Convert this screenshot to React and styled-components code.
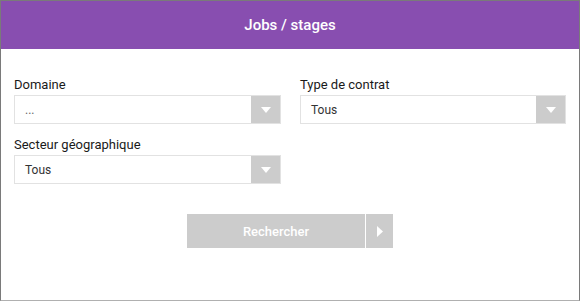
import React from 'react';
import styled, { createGlobalStyle } from 'styled-components';

const Global = createGlobalStyle`
  html, body { margin: 0; padding: 0; background: #fff; }
  body { font-family: Roboto, "Liberation Sans", sans-serif; }
`;

const Frame = styled.div`
  box-sizing: border-box;
  width: 580px;
  height: 301px;
  border: 1px solid #7a7a7a;
  border-bottom-color: #b0b0b0;
  background: #fff;
  display: flex;
  flex-direction: column;
`;

const Header = styled.div`
  height: 48px;
  background: #884eb0;
  color: #fff;
  display: flex;
  align-items: center;
  justify-content: center;
  font-size: 15px;
  font-weight: 500;
`;

const Body = styled.div`
  padding: 28px 13px 0 13px;
  display: grid;
  grid-template-columns: 267px 266px;
  column-gap: 19px;
  row-gap: 13px;
`;

const Field = styled.div`
  display: flex;
  flex-direction: column;
`;

const Label = styled.label`
  font-size: 13px;
  color: #1a1a1a;
  line-height: 15px;
  margin-bottom: 3px;
`;

const Select = styled.div`
  box-sizing: border-box;
  height: 29px;
  border: 1px solid #e2e2e2;
  display: flex;
  align-items: stretch;
`;

const Value = styled.span`
  flex: 1;
  display: flex;
  align-items: center;
  padding-left: 10px;
  font-size: 12px;
  color: ${p => (p.muted ? '#666' : '#333')};
`;

const ArrowBox = styled.span`
  width: 29px;
  background: #cccccc;
  display: flex;
  align-items: center;
  justify-content: center;
`;

const Actions = styled.div`
  display: flex;
  justify-content: center;
  padding-top: 30px;
`;

const Main = styled.button`
  width: 178px;
  height: 34px;
  border: none;
  background: #cccccc;
  color: #fff;
  font-family: inherit;
  font-size: 13px;
  font-weight: 500;
`;

const Go = styled.button`
  width: 28px;
  height: 34px;
  border: none;
  border-left: 1px solid #fff;
  background: #cccccc;
  display: flex;
  align-items: center;
  justify-content: center;
  padding: 0;
`;

const Down = () => (
  <svg width="10" height="6" viewBox="0 0 10 6"><path d="M0 0h10L5 6z" fill="#fff" /></svg>
);

const Right = () => (
  <svg width="6" height="11" viewBox="0 0 6 11"><path d="M0 0v11l6-5.5z" fill="#fff" /></svg>
);

const Dropdown = ({ label, value, muted }) => (
  <Field>
    <Label>{label}</Label>
    <Select>
      <Value muted={muted}>{value}</Value>
      <ArrowBox><Down /></ArrowBox>
    </Select>
  </Field>
);

export default function App() {
  return (
    <>
      <Global />
      <Frame>
        <Header>Jobs / stages</Header>
        <Body>
          <Dropdown label="Domaine" value="..." muted />
          <Dropdown label="Type de contrat" value="Tous" />
          <Dropdown label="Secteur géographique" value="Tous" />
        </Body>
        <Actions>
          <Main>Rechercher</Main>
          <Go><Right /></Go>
        </Actions>
      </Frame>
    </>
  );
}
